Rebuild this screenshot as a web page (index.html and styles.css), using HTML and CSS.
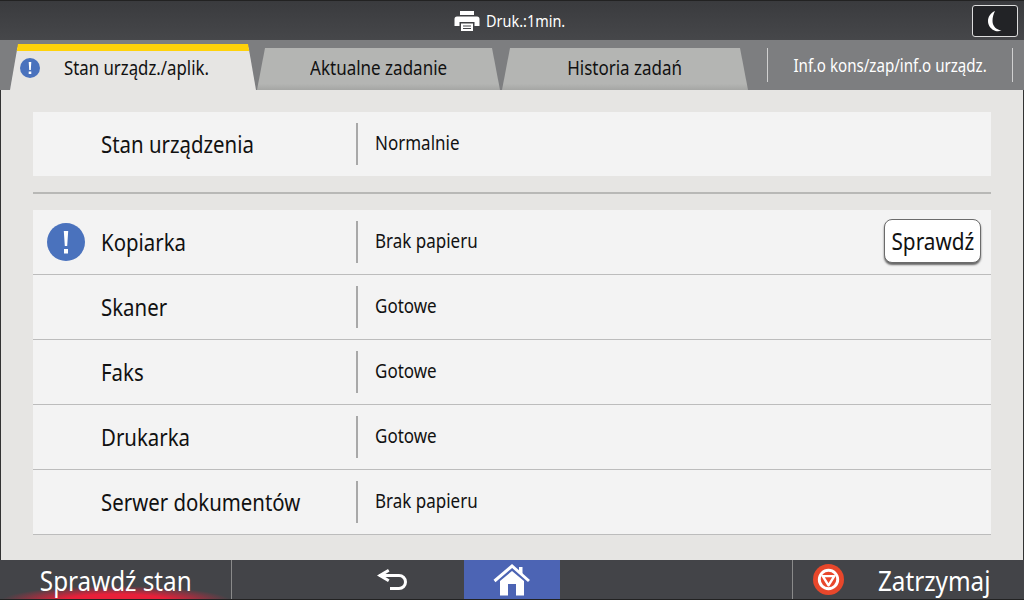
FILE: index.html
```html
<!DOCTYPE html>
<html lang="pl">
<head>
<meta charset="utf-8">
<title>Stan urządzenia</title>
<link rel="stylesheet" href="styles.css">
</head>
<body>
<div class="screen">
  <header class="topbar">
    <div class="job">
      <svg class="printer" viewBox="0 0 26 22" width="26" height="22"><path fill="#fff" d="M6 1h14v4H6z"/><path fill="#fff" d="M3 6.500h20a2.500 2.500 0 0 1 2.500 2.500v7H20.500v-4H5.500v4H.5V9A2.500 2.500 0 0 1 3 6.500z"/><path fill="#fff" d="M7 13.500h12V21H7z"/><path stroke="#434448" stroke-width="1" d="M9 16h8M9 18.500h8"/></svg>
      <span class="txt">Druk.:1min.</span>
    </div>
    <button class="sleep"><svg viewBox="0 0 16 22" width="16" height="22"><path fill="#fff" d="M8 1C3.500 3 1 7 1 11c0 4.500 3 8.500 7.500 10 2 .5 4.500.3 6-.5C10 20 5.500 16.500 5.500 11 5.500 7 6.500 4 8 1z"/></svg></button>
  </header>
  <nav class="tabs">
    <div class="tab tab-active"><svg class="tab-alert" viewBox="0 0 20 20" width="20" height="20"><circle cx="10" cy="10" r="10" fill="#4a72bd"/><path fill="#fff" d="M8.700 4h2.600l-.5 8H9.200zM8.700 13.500h2.600v2.500H8.700z"/></svg><span class="txt">Stan urządz./aplik.</span></div>
    <div class="tab tab-two"><span class="txt txt-c">Aktualne zadanie</span></div>
    <div class="tab tab-three"><span class="txt txt-c">Historia zadań</span></div>
    <div class="tab-info"><span class="txt txt-c">Inf.o kons/zap/inf.o urządz.</span></div>
  </nav>
  <main class="content">
    <section class="card">
      <div class="row row-first"><div class="name"><span class="txt">Stan urządzenia</span></div><div class="value"><span class="txt">Normalnie</span></div></div>
    </section>
    <hr class="rule">
    <section class="card list">
      <div class="row"><svg class="alert" viewBox="0 0 38 38" width="38" height="38"><circle cx="19" cy="19" r="19" fill="#4a72bd"/><path fill="#fff" d="M16.800 8h4.400l-1 15h-2.400zM17 26h4v4.500h-4z"/></svg><div class="name"><span class="txt">Kopiarka</span></div><div class="value"><span class="txt">Brak papieru</span></div><button class="check"><span class="txt txt-c">Sprawdź</span></button></div>
      <div class="row"><div class="name"><span class="txt">Skaner</span></div><div class="value"><span class="txt">Gotowe</span></div></div>
      <div class="row"><div class="name"><span class="txt">Faks</span></div><div class="value"><span class="txt">Gotowe</span></div></div>
      <div class="row"><div class="name"><span class="txt">Drukarka</span></div><div class="value"><span class="txt">Gotowe</span></div></div>
      <div class="row"><div class="name"><span class="txt">Serwer dokumentów</span></div><div class="value"><span class="txt">Brak papieru</span></div></div>
    </section>
  </main>
  <footer class="bottombar">
    <div class="status"><span class="txt txt-c">Sprawdź stan</span></div>
    <div class="nav">
      <div class="back"><svg viewBox="0 0 32 24" width="32" height="24"><path fill="none" stroke="#fff" stroke-width="3" d="M3 7.500h20a6 6 0 0 1 0 13h-9"/><path fill="#fff" d="M1 7.500 12 1l1.500 2.500-6.500 4 6.500 4L12 14z"/></svg></div>
      <div class="home"><svg viewBox="0 0 38 32" width="38" height="32"><path fill="none" stroke="#fff" stroke-width="3" d="M1.500 17 19 2l17 15"/><path fill="#fff" d="M26 3h3.500v8L26 8z"/><path fill="#fff" fill-rule="evenodd" d="M7 17 19 7l12 10v14.500H7zM15 20v11.500h8V20z"/></svg></div>
    </div>
    <div class="stop"><svg viewBox="0 0 32 32" width="31" height="31"><circle cx="16" cy="16" r="16" fill="#e8472b"/><circle cx="16" cy="16" r="9.500" fill="none" stroke="#fff" stroke-width="3"/><path fill="none" stroke="#fff" stroke-width="2.500" stroke-linejoin="round" d="M10 12.500h12L16 22z"/></svg><span class="txt">Zatrzymaj</span></div>
  </footer>
</div>
</body>
</html>
```
FILE: styles.css
```css
* { box-sizing: border-box; }
html, body { margin: 0; padding: 0; }
body { font-family: "Noto Sans", Roboto, sans-serif; color: #111; overflow: hidden; }
button { font-family: inherit; }
.txt { display: inline-block; white-space: nowrap; transform: scaleX(.85); transform-origin: left center; }
.txt-c { transform-origin: center; }
.bottombar .txt { transform: scaleX(.865); }
.check .txt { transform: scaleX(.865); }
.tab-active .txt { transform: scaleX(.84); }
.tab-info .txt { transform: scaleX(.84); }
.screen { width: 1024px; height: 600px; display: flex; flex-direction: column; background: #e6e5e3; border-left: 1px solid #333; border-right: 1px solid #333; }

.topbar { height: 40px; margin: 0 -1px; padding-right: 2px; background: linear-gradient(#3a3b3e, #46474a); border-top: 1px solid #222; display: flex; align-items: center; position: relative; }
.job { flex: 1; display: flex; align-items: center; gap: 6px; color: #fff; font-size: 17px; padding-left: 454px; }
.printer { width: 26px; height: 22px; }
.sleep { width: 46px; height: 32px; margin-right: 4px; border: 1px solid #ddd; border-radius: 3px; background: #222326; display: flex; align-items: center; justify-content: center; padding: 0; }

.tabs { height: 50px; margin: 0 -1px; background: #7d7e80; display: flex; align-items: flex-end; font-size: 20px; padding-left: 10px; }
.tab { height: 42px; width: 246px; margin-right: -1px; display: flex; align-items: center; justify-content: center; background: linear-gradient(#b4b5b3 85%, #a5a6a4); clip-path: polygon(8px 0, calc(100% - 8px) 0, 100% 100%, 0 100%); border-radius: 4px 4px 0 0; padding-bottom: 4px; }
.tab-active { height: 46px; position: relative; background: #e6e5e3; border-top: 7px solid #ffd20a; justify-content: flex-start; padding-left: 54px; padding-bottom: 6px; margin-right: 0; }
.tab-two { margin-left: 1px; width: 243px; }
.tab-three { margin-left: 3px; }
.tab-alert { position: absolute; left: 10px; top: 7px; }
.tab-info { width: 246px; height: 34px; margin: 0 0 8px 20px; border-left: 1px solid #d0d0d0; border-right: 1px solid #d0d0d0; color: #fff; font-size: 18px; display: flex; align-items: center; justify-content: center; }

.content { flex: 1; padding: 22px 32px 0; }
.card { background: #f3f3f3; }
.rule { height: 2px; margin: 16px 0; border: 0; background: #b8b8b6; }
.row { height: 65px; display: flex; align-items: center; position: relative; border-bottom: 1px solid #bcbcbc; }
.row-first { height: 64px; border-bottom: 0; }
.alert { position: absolute; left: 14px; top: 13px; }
.name { width: 325px; height: 42px; padding: 0 0 2px 68px; border-right: 2px solid #a8a8a8; display: flex; align-items: center; font-size: 24px; }
.value { flex: 1; padding: 0 0 3px 17px; font-size: 20px; }
.check { width: 97px; height: 44px; margin: -3px 10px 0 0; background: #fff; border: 1px solid #6b6b6b; border-radius: 8px; box-shadow: 0 2px 2px #666; font-size: 24px; color: #111; padding: 0; }

.bottombar { height: 40px; margin: 0 -1px; background: #434448; display: flex; color: #fff; font-size: 28px; border-bottom: 1px solid #222; }
.status { width: 232px; border-right: 1px solid #8a8a8a; display: flex; justify-content: center; align-items: center; background: radial-gradient(ellipse 115px 15px at 116px 41px, #e8203a 45%, rgba(232,32,58,0) 100%); }
.nav { width: 560px; display: flex; }
.back { width: 232px; display: flex; align-items: center; justify-content: center; padding-left: 88px; }
.home { width: 96px; background: #4c64b4; display: flex; align-items: center; justify-content: center; }
.stop { width: 232px; border-left: 1px solid #8a8a8a; display: flex; align-items: center; padding-left: 20px; gap: 34px; }
```
